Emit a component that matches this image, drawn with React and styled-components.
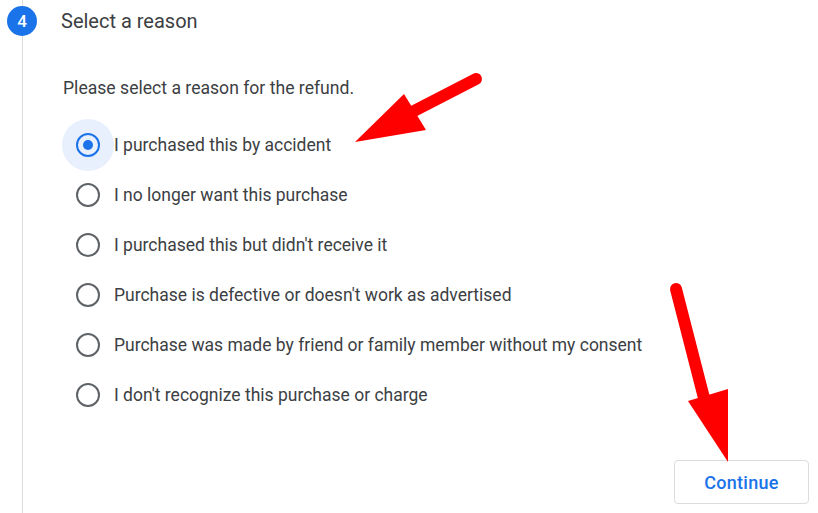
import React, { useState } from "react";
import styled, { createGlobalStyle } from "styled-components";

const GlobalStyle = createGlobalStyle`
  body {
    margin: 0;
    background: #ffffff;
    font-family: Roboto, "Liberation Sans", Arial, sans-serif;
  }
`;

const reasons = [
  "I purchased this by accident",
  "I no longer want this purchase",
  "I purchased this but didn't receive it",
  "Purchase is defective or doesn't work as advertised",
  "Purchase was made by friend or family member without my consent",
  "I don't recognize this purchase or charge",
];

const App = () => {
  const [picked, setPicked] = useState(0);

  return (
    <Page>
      <GlobalStyle />
      <Rail>
        <RailLine $top />
        <StepBadge>4</StepBadge>
        <RailLine />
      </Rail>
      <Content>
        <StepTitle>Select a reason</StepTitle>
        <Prompt>Please select a reason for the refund.</Prompt>
        <ReasonList>
          {reasons.map((text, i) => (
            <ReasonRow key={text} onClick={() => setPicked(i)}>
              <RadioHalo $active={picked === i}>
                <Radio $active={picked === i} />
              </RadioHalo>
              <ReasonText>{text}</ReasonText>
            </ReasonRow>
          ))}
        </ReasonList>
        <Footer>
          <ContinueButton>Continue</ContinueButton>
        </Footer>
      </Content>

      <Arrows width="818" height="513" viewBox="0 0 818 513">
        <line x1="476" y1="79" x2="412" y2="112" stroke="#ff0000" strokeWidth="12" strokeLinecap="round" />
        <polygon points="355,142 404,94 426,130" fill="#ff0000" />
        <line x1="676" y1="289" x2="704" y2="398" stroke="#ff0000" strokeWidth="12" strokeLinecap="round" />
        <polygon points="728,462 688,401 728,389" fill="#ff0000" />
      </Arrows>
    </Page>
  );
};

const Page = styled.div`
  position: relative;
  display: flex;
  width: 818px;
  height: 513px;
  overflow: hidden;
  color: #3c4043;
`;

const Rail = styled.div`
  width: 44px;
  display: flex;
  flex-direction: column;
  align-items: center;
  flex-shrink: 0;
`;

const RailLine = styled.div`
  width: 1px;
  background: #dadce0;
  flex: ${(p) => (p.$top ? "0 0 6px" : "1")};
`;

const StepBadge = styled.div`
  width: 30px;
  height: 30px;
  border-radius: 50%;
  background: #1a73e8;
  color: #ffffff;
  font-size: 17px;
  font-weight: 500;
  display: flex;
  align-items: center;
  justify-content: center;
  flex-shrink: 0;
`;

const Content = styled.div`
  flex: 1;
  display: flex;
  flex-direction: column;
  padding-top: 6px;
  padding-left: 17px;
`;

const StepTitle = styled.div`
  height: 30px;
  line-height: 30px;
  font-size: 20px;
  color: #3c4043;
`;

const Prompt = styled.div`
  margin-top: 40px;
  margin-left: 2px;
  font-size: 17.6px;
  line-height: 24px;
`;

const ReasonList = styled.div`
  margin-top: 20px;
  display: flex;
  flex-direction: column;
`;

const ReasonRow = styled.div`
  height: 50px;
  display: flex;
  align-items: center;
  margin-left: 1px;
  cursor: pointer;
`;

const RadioHalo = styled.div`
  width: 52px;
  height: 52px;
  margin: -1px 0;
  border-radius: 50%;
  display: flex;
  align-items: center;
  justify-content: center;
  background: ${(p) => (p.$active ? "#e8f0fe" : "transparent")};
  flex-shrink: 0;
`;

const Radio = styled.div`
  width: 20px;
  height: 20px;
  border-radius: 50%;
  border: 2px solid ${(p) => (p.$active ? "#1a73e8" : "#5f6368")};
  display: flex;
  align-items: center;
  justify-content: center;

  &::after {
    content: "";
    width: 10px;
    height: 10px;
    border-radius: 50%;
    background: ${(p) => (p.$active ? "#1a73e8" : "transparent")};
  }
`;

const ReasonText = styled.span`
  font-size: 17.5px;
  color: #3c4043;
`;

const Footer = styled.div`
  margin-top: 40px;
  display: flex;
  justify-content: flex-end;
  padding-right: 9px;
`;

const ContinueButton = styled.button`
  width: 135px;
  height: 44px;
  border: 1px solid #dadce0;
  border-radius: 4px;
  background: #ffffff;
  color: #1a73e8;
  font-family: Roboto, "Liberation Sans", Arial, sans-serif;
  font-size: 18px;
  font-weight: 500;
  letter-spacing: 0.3px;
  cursor: pointer;
`;

const Arrows = styled.svg`
  position: absolute;
  left: 0;
  top: 0;
  pointer-events: none;
`;

export default App;
